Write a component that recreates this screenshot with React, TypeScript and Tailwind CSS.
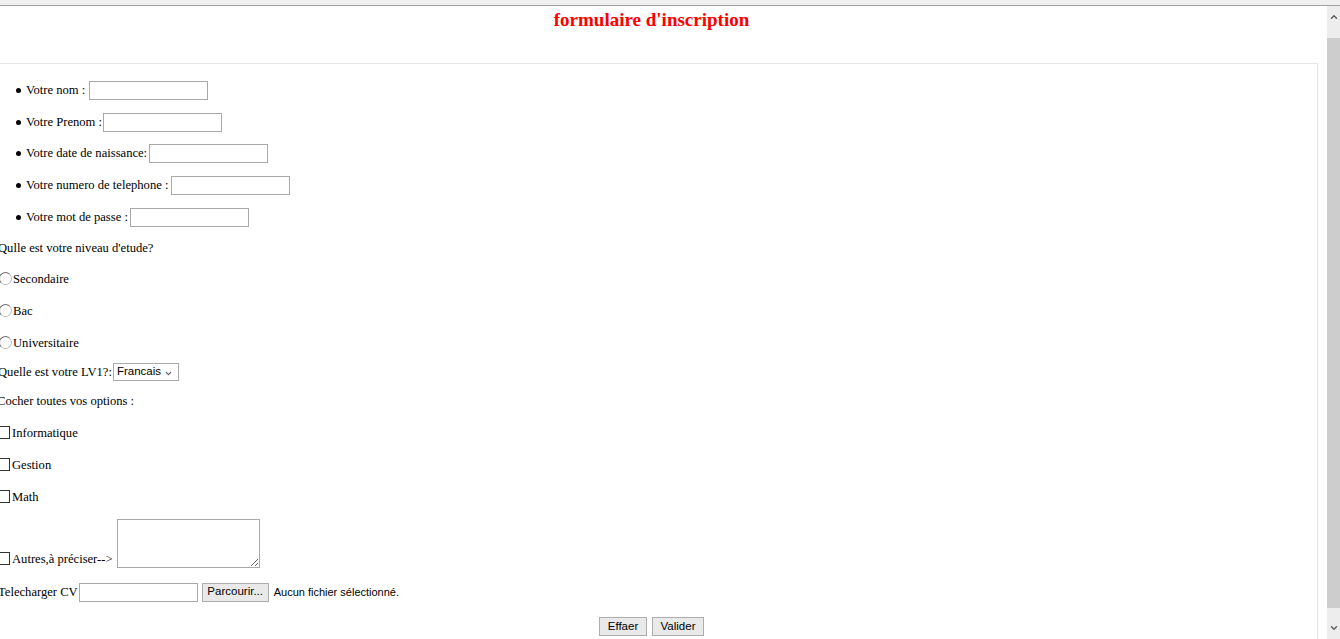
import { ChevronDown, ChevronUp } from "lucide-react";

const fields = [
  { label: "Votre nom :", h: "h-[32px]", gap: "ml-[4px]" },
  { label: "Votre Prenom :", h: "h-[32px]", gap: "ml-[1px]" },
  { label: "Votre date de naissance:", h: "h-[31px]", gap: "ml-[2px]" },
  { label: "Votre numero de telephone :", h: "h-[32px]", gap: "ml-[3px]" },
  { label: "Votre mot de passe :", h: "h-[32px]", gap: "ml-[2px]" },
];

function TextBox({ w = "w-[119px]" }: { w?: string }) {
  return <span className={`inline-block ${w} h-[19px] border border-[#a9a9a9] bg-white`} />;
}

function Radio({ label }: { label: string }) {
  return (
    <div className="h-[32px] flex items-center -ml-[1px] pt-[1px]">
      <span className="w-[13px] h-[13px] rounded-full border border-[#6f6f6f] border-r-[#bdbdbd] border-b-[#bdbdbd] bg-white mr-[1px] -mt-[3px]" />
      <span>{label}</span>
    </div>
  );
}

function Check({ label }: { label: string }) {
  return (
    <div className="h-[32px] flex items-center -ml-[3px] pt-[1px]">
      <span className="w-[13px] h-[13px] border border-[#333] bg-white mr-[2px] -mt-[3px]" />
      <span>{label}</span>
    </div>
  );
}

function WinButton({ label, w }: { label: string; w: string }) {
  return (
    <span
      className={`inline-flex items-center justify-center ${w} h-[19px] border border-[#adadad] bg-[#e9e9e9] text-[11.5px] font-['Liberation_Sans',Arial,sans-serif]`}
    >
      {label}
    </span>
  );
}

export default function App() {
  return (
    <div className="h-[639px] w-[1340px] overflow-hidden bg-white flex flex-col font-['Liberation_Serif','Times_New_Roman',serif] text-[12.6px] text-black">
      <div className="h-[6px] shrink-0 bg-[#f0f0f0] border-b border-[#a0a0a0]" />
      <div className="flex flex-1 min-h-0">
        <div className="flex-1 flex flex-col overflow-hidden">
          {/* title */}
          <div className="h-[57px] shrink-0 pr-[24px] pt-[3px] text-center">
            <h1 className="text-[19px] leading-[22px] font-bold text-[#ff0000]">formulaire d'inscription</h1>
          </div>

          {/* fieldset */}
          <div className="flex-1 border-t border-r border-[#e6e6e6] mr-[9px] pt-[10px]">
            <ul>
              {fields.map((f) => (
                <li key={f.label} className={`${f.h} flex items-center`}>
                  <span className="w-[5px] h-[5px] rounded-full bg-black ml-[16px] mr-[5px]" />
                  <span>{f.label}</span>
                  <span className={`${f.gap} flex`}>
                    <TextBox />
                  </span>
                </li>
              ))}
            </ul>

            <div className="h-[30px] flex items-center -ml-[2px]">Qulle est votre niveau d'etude?</div>
            <Radio label="Secondaire" />
            <Radio label="Bac" />
            <Radio label="Universitaire" />

            <div className="h-[26px] flex items-center -ml-[2px]">
              <span>Quelle est votre LV1?:</span>
              <span className="ml-[1px] inline-flex items-center w-[66px] h-[18px] border border-[#a9a9a9] bg-white pl-[3px] text-[11.5px] font-['Liberation_Sans',Arial,sans-serif]">
                <span className="flex-1">Francais</span>
                <ChevronDown size={9} strokeWidth={3} className="text-[#555] mr-[5px] mt-[3px]" />
              </span>
            </div>

            <div className="h-[32px] flex items-center -ml-[3px]">Cocher toutes vos options :</div>
            <Check label="Informatique" />
            <Check label="Gestion" />
            <Check label="Math" />

            <div className="h-[57px] flex items-end -ml-[3px]">
              <span className="w-[13px] h-[13px] border border-[#333] bg-white mr-[2px] mb-[5px]" />
              <span className="mb-[1px]">Autres,à préciser--&gt;</span>
              <textarea
                readOnly
                className="ml-[4px] mb-[2px] w-[143px] h-[49px] border border-[#a9a9a9] bg-white resize"
              />
            </div>

            <div className="h-[44px] flex items-center -ml-[2px]">
              <span>Telecharger CV</span>
              <span className="ml-[1px] flex">
                <TextBox />
              </span>
              <span className="ml-[4px] flex">
                <WinButton label="Parcourir..." w="w-[67px]" />
              </span>
              <span className="ml-[5px] text-[11px] font-['Liberation_Sans',Arial,sans-serif]">
                Aucun fichier sélectionné.
              </span>
            </div>

            <div className="flex justify-center gap-[5px] pt-[3px] pr-[14px]">
              <WinButton label="Effaer" w="w-[48px]" />
              <WinButton label="Valider" w="w-[52px]" />
            </div>
          </div>
        </div>

        {/* scrollbar */}
        <div className="w-[13px] shrink-0 flex flex-col bg-[#ededed]">
          <div className="h-[32px] flex justify-center pt-[6px]">
            <ChevronUp size={10} strokeWidth={3.5} className="text-[#606060]" />
          </div>
          <div className="flex-1 bg-[#cdcdcd]" />
          <div className="h-[31px] flex justify-center items-end pb-[6px]">
            <ChevronDown size={10} strokeWidth={3.5} className="text-[#606060]" />
          </div>
        </div>
      </div>
    </div>
  );
}
